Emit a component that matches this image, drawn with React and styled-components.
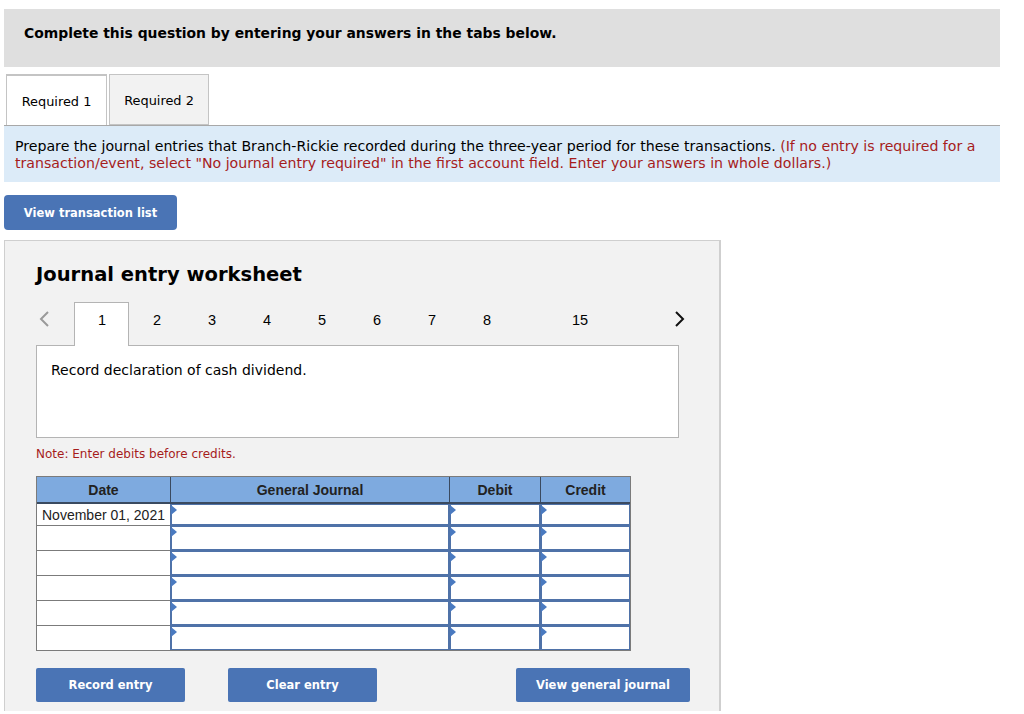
import styled, { createGlobalStyle } from 'styled-components'

const GlobalStyle = createGlobalStyle`
  html, body {
    margin: 0;
    padding: 0;
    background: #fff;
    overflow: hidden;
  }
  * {
    box-sizing: border-box;
  }
`

const Page = styled.div`
  width: 1024px;
  height: 714px;
  padding: 9px 24px 0 4px;
  overflow: hidden;
  font-family: "DejaVu Sans", Verdana, sans-serif;
  color: #000;
`

const Banner = styled.div`
  height: 58px;
  padding: 16px 20px 0;
  background: #dfdfdf;
  font-size: 13.9px;
  line-height: 17px;
  font-weight: 700;
`

const TabRow = styled.div`
  display: flex;
  gap: 2px;
  margin-top: 7px;
  padding-left: 2px;
`

const Tab = styled.div`
  width: ${(p) => (p.$active ? '101px' : '100px')};
  height: 51px;
  display: flex;
  align-items: center;
  justify-content: center;
  padding-top: ${(p) => (p.$active ? '1px' : '2px')};
  font-size: 12.9px;
  background: ${(p) => (p.$active ? '#fff' : '#f2f2f2')};
  border: 1px solid #c4c4c4;
  border-bottom: ${(p) => (p.$active ? 'none' : '1px solid #c4c4c4')};
  border-top-width: ${(p) => (p.$active ? '2px' : '1px')};
  margin-bottom: ${(p) => (p.$active ? '-1px' : '0')};
  position: relative;
  z-index: ${(p) => (p.$active ? 1 : 0)};
`

const InfoBox = styled.div`
  height: 57px;
  padding: 12px 11px 0;
  background: #dcebf8;
  border-top: 1px solid #a8a8a8;
  font-size: 14.15px;
  line-height: 17px;
`

const Hint = styled.span`
  color: #a61c1c;
`

const Button = styled.button`
  display: flex;
  align-items: center;
  justify-content: center;
  width: ${(p) => p.$width}px;
  height: ${(p) => p.$height || 34}px;
  padding: 0;
  border: 0;
  border-radius: ${(p) => p.$radius || 2}px;
  background: #4a74b5;
  color: #fff;
  font-family: inherit;
  font-size: 11.5px;
  font-weight: 700;
`

const TopAction = styled.div`
  margin-top: 13px;
`

const Panel = styled.div`
  margin-top: 10px;
  width: 717px;
  height: 471px;
  padding: 22px 0 0 31px;
  background: #f2f2f2;
  border: 1px solid #cfcfcf;
  border-right-width: 2px;
  border-bottom: none;
`

const Title = styled.h2`
  margin: 0;
  font-size: 19.55px;
  line-height: 24px;
  font-weight: 700;
`

const StepNav = styled.div`
  height: 43px;
  margin-top: 15px;
  width: 642px;
  position: relative;
`

const Arrow = styled.svg`
  position: absolute;
  top: 9px;
  left: ${(p) => p.$left}px;
  width: 12px;
  height: 16px;
  fill: none;
  stroke: ${(p) => p.$color};
  stroke-width: 2;
`

const StepList = styled.div`
  display: flex;
  align-items: flex-start;
  height: 43px;
  margin-left: 38px;
`

const Step = styled.div`
  width: ${(p) => p.$width || 55}px;
  height: ${(p) => (p.$active ? '44px' : '43px')};
  display: flex;
  align-items: center;
  justify-content: center;
  padding: 0 0 ${(p) => (p.$active ? '9px' : '7px')} 1px;
  font-size: 14.5px;
  font-family: "Liberation Sans", Arial, sans-serif;
  background: ${(p) => (p.$active ? '#fff' : 'transparent')};
  border: ${(p) => (p.$active ? '1px solid #b4b4b4' : 'none')};
  border-bottom: none;
  position: relative;
  z-index: 1;
`

const Description = styled.div`
  width: 643px;
  height: 93px;
  padding: 16px 14px 0;
  background: #fff;
  border: 1px solid #b4b4b4;
  font-size: 14px;
  line-height: 17px;
`

const Note = styled.div`
  margin-top: 9px;
  height: 15px;
  font-size: 12px;
  line-height: 15px;
  color: #a61c1c;
`

const Table = styled.div`
  margin-top: 14px;
  width: 595px;
  border: 1px solid #7b7b7b;
  font-family: "Liberation Sans", Arial, sans-serif;
  font-size: 14px;
  color: #222;
`

const Row = styled.div`
  display: grid;
  grid-template-columns: 133px 279px 91px 1fr;
  height: ${(p) => p.$height}px;
`

const HeadCell = styled.div`
  display: flex;
  align-items: center;
  justify-content: center;
  background: #7eaadf;
  font-weight: 700;
  border-left: ${(p) => (p.$first ? 'none' : '1px solid #3a4a60')};
  border-bottom: 2px solid #3a4a60;
`

const DateCell = styled.div`
  display: flex;
  align-items: center;
  padding-left: 5px;
  background: #fff;
  border-bottom: ${(p) => (p.$last ? 'none' : '1px solid #7b7b7b')};
  white-space: nowrap;
`

const EntryCell = styled.div`
  position: relative;
  background: #fff;
  border: 2px solid #4f72a8;
  border-top-width: 1px;
  border-right-width: 1px;
  border-bottom-width: ${(p) => (p.$last ? '1px' : '2px')};

  &::before {
    content: '';
    position: absolute;
    top: 0;
    left: -1px;
    border-left: 6px solid #4a7ac0;
    border-top: 5px solid transparent;
    border-bottom: 5px solid transparent;
  }
`

const ActionRow = styled.div`
  display: flex;
  gap: 43px;
  margin-top: 17px;
  width: 654px;
`

const LastAction = styled.div`
  margin-left: auto;
`

const rows = [
  { date: 'November 01, 2021', height: 22 },
  { date: '', height: 25 },
  { date: '', height: 25 },
  { date: '', height: 25 },
  { date: '', height: 25 },
  { date: '', height: 24 },
]

const steps = [
  { label: '1', active: true },
  { label: '2' },
  { label: '3' },
  { label: '4' },
  { label: '5' },
  { label: '6' },
  { label: '7' },
  { label: '8' },
  { label: '15', width: 131 },
]

export default function App() {
  return (
    <Page>
      <GlobalStyle />
      <Banner>Complete this question by entering your answers in the tabs below.</Banner>

      <TabRow>
        <Tab $active>Required 1</Tab>
        <Tab>Required 2</Tab>
      </TabRow>

      <InfoBox>
        Prepare the journal entries that Branch-Rickie recorded during the three-year period for these transactions.{' '}
        <Hint>
          (If no entry is required for a transaction/event, select "No journal entry required" in the first account
          field. Enter your answers in whole dollars.)
        </Hint>
      </InfoBox>

      <TopAction>
        <Button $width={173} $height={35} $radius={4}>View transaction list</Button>
      </TopAction>

      <Panel>
        <Title>Journal entry worksheet</Title>

        <StepNav>
          <Arrow $left={2} $color="#9a9a9a" viewBox="0 0 12 16">
            <path d="M10 1 L3 8 L10 15" />
          </Arrow>
          <StepList>
            {steps.map((s) => (
              <Step key={s.label} $active={s.active} $width={s.width}>{s.label}</Step>
            ))}
          </StepList>
          <Arrow $left={638} $color="#111" viewBox="0 0 12 16">
            <path d="M2 1 L9 8 L2 15" />
          </Arrow>
        </StepNav>

        <Description>Record declaration of cash dividend.</Description>
        <Note>Note: Enter debits before credits.</Note>

        <Table>
          <Row $height={27}>
            <HeadCell $first>Date</HeadCell>
            <HeadCell>General Journal</HeadCell>
            <HeadCell>Debit</HeadCell>
            <HeadCell>Credit</HeadCell>
          </Row>
          {rows.map((r, i) => {
            const last = i === rows.length - 1
            return (
              <Row key={i} $height={r.height}>
                <DateCell $last={last}>{r.date}</DateCell>
                <EntryCell $last={last} />
                <EntryCell $last={last} />
                <EntryCell $last={last} />
              </Row>
            )
          })}
        </Table>

        <ActionRow>
          <Button $width={149}>Record entry</Button>
          <Button $width={149}>Clear entry</Button>
          <LastAction>
            <Button $width={174}>View general journal</Button>
          </LastAction>
        </ActionRow>
      </Panel>
    </Page>
  )
}
